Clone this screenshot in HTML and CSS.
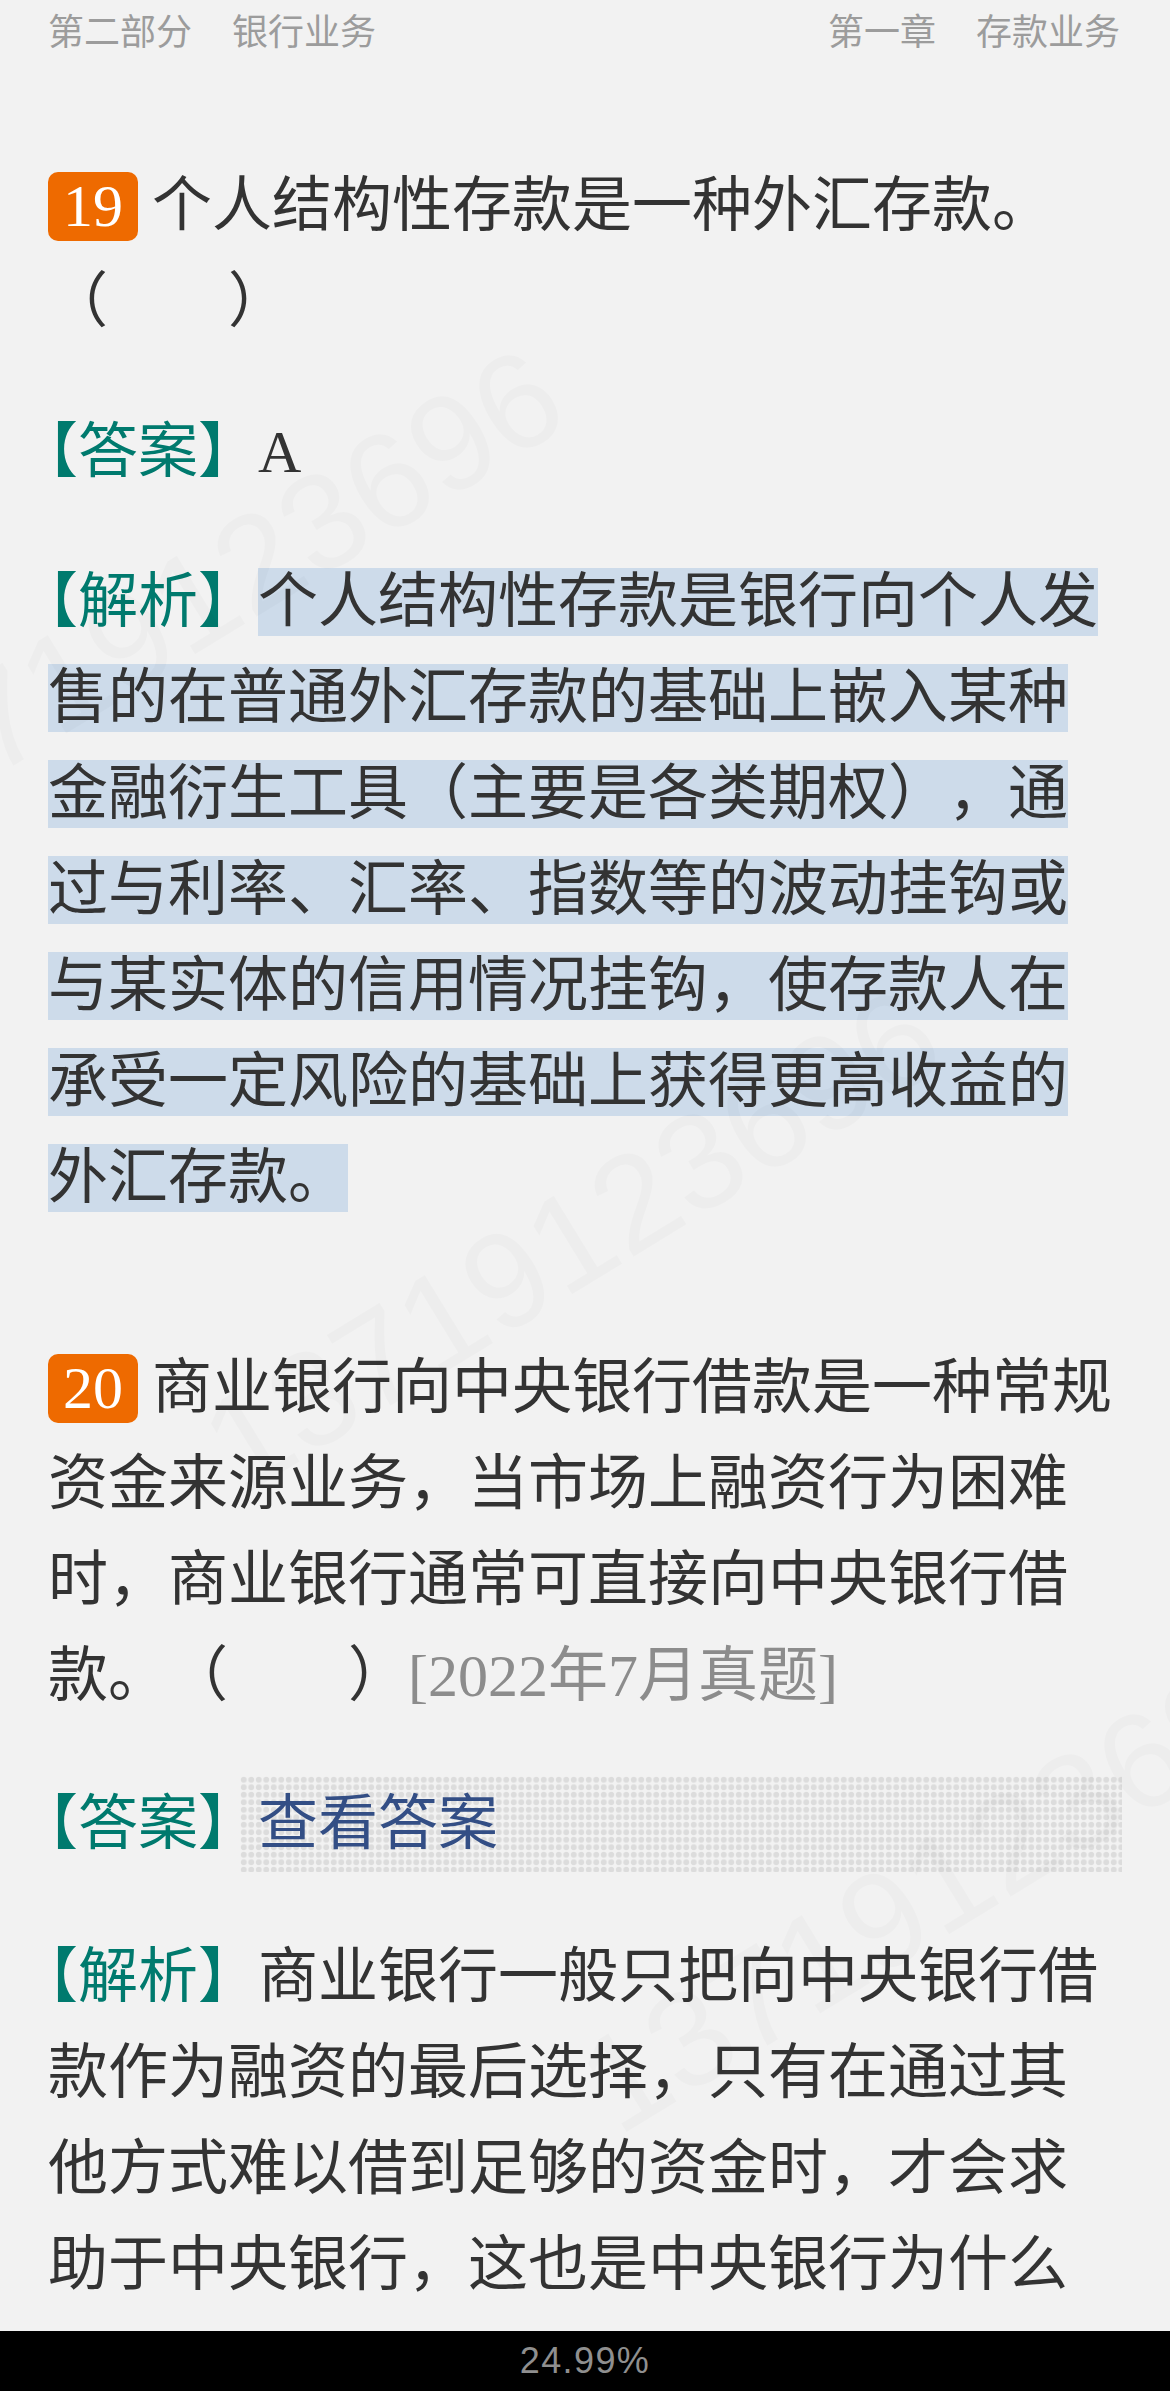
FILE: index.html
```html
<!DOCTYPE html>
<html lang="zh-CN">
<head>
<meta charset="utf-8">
<title>第一章 存款业务</title>
<link rel="stylesheet" href="styles.css">
</head>
<body>
<div class="page">
  <main class="content">
    <header class="running">
      <div class="running-side"><span>第二部分</span><span>银行业务</span></div>
      <div class="running-side"><span>第一章</span><span>存款业务</span></div>
    </header>

    <section class="question first">
      <p class="stem"><span class="badge">19</span>个人结构性存款是一种外汇存款。（　　）</p>
      <p class="answer"><span class="tag">【答案】</span>A</p>
      <p class="analysis"><span class="tag">【解析】</span><span class="marked">个人结构性存款是银行向个人发售的在普通外汇存款的基础上嵌入某种金融衍生工具（主要是各类期权），通过与利率、汇率、指数等的波动挂钩或与某实体的信用情况挂钩，使存款人在承受一定风险的基础上获得更高收益的外汇存款。</span></p>
    </section>

    <section class="question second">
      <p class="stem"><span class="badge">20</span>商业银行向中央银行借款是一种常规资金来源业务，当市场上融资行为困难时，商业银行通常可直接向中央银行借款。（　　）<span class="source">[2022年7月真题]</span></p>
      <div class="answer reveal-row"><span class="tag tight">【答案】</span><a class="reveal">查看答案</a></div>
      <p class="analysis"><span class="tag">【解析】</span>商业银行一般只把向中央银行借款作为融资的最后选择，只有在通过其他方式难以借到足够的资金时，才会求助于中央银行，这也是中央银行为什么</p>
    </section>

    <div class="watermarks" aria-hidden="true">
      <span class="wm wm-a">13719123696</span>
      <span class="wm wm-b">13719123696</span>
      <span class="wm wm-c">13719123696</span>
    </div>
  </main>
  <footer class="progress">24.99%</footer>
</div>
</body>
</html>
```

FILE: styles.css
```css
* { box-sizing: border-box; }

html, body { margin: 0; padding: 0; }

body {
  background: #f2f2f2;
  font-family: "Liberation Serif", "Noto Sans CJK SC", serif;
  color: #333;
}

.page {
  height: 100vh;
  display: flex;
  flex-direction: column;
  overflow: hidden;
}

.content {
  position: relative;
  flex: 1;
  min-height: 0;
  overflow: hidden;
  padding: 0 48px;
  font-size: 60px;
  line-height: 96px;
  text-spacing-trim: space-all;
}

.running {
  display: flex;
  justify-content: space-between;
  height: 58px;
  padding-right: 2px;
  font-family: "Noto Sans CJK SC", sans-serif;
  font-size: 36px;
  line-height: 58px;
  color: #9c9c9c;
}

.running-side { display: flex; gap: 40px; }

.question p { margin: 0; }

.first { margin-top: 100px; }
.second { margin-top: 114px; }

.badge {
  display: inline-block;
  width: 90px;
  height: 69px;
  margin-right: 14px;
  border-radius: 10px;
  background: #ee6a00;
  color: #fff;
  font-size: 60px;
  line-height: 69px;
  text-align: center;
  vertical-align: baseline;
}

.question .answer { margin-top: 54px; }
.question .analysis { margin-top: 54px; }
.second.question .answer { margin-top: 52px; }
.second.question .analysis { margin-top: 57px; }

.tag {
  display: inline-block;
  margin-right: 30px;
  color: #007a6e;
  font-feature-settings: "halt";
}

.marked {
  padding: 1px 0;
  background: #cddbea;
}

.source { color: #8c8c8c; }

.reveal-row { display: flex; }

.tag.tight { margin-right: 12px; }

.reveal {
  flex: 1;
  height: 96px;
  padding-left: 18px;
  color: #334e85;
  background-color: transparent;
  background-image: radial-gradient(circle at center, #dcdcdc 0, #dcdcdc 2.6px, transparent 3.4px);
  background-size: 7.5px 7.5px;
}

.watermarks {
  position: absolute;
  inset: 0;
  pointer-events: none;
}

.wm {
  position: absolute;
  font-family: "Liberation Sans", sans-serif;
  font-size: 136px;
  line-height: 1;
  color: rgba(0, 0, 0, 0.02);
  white-space: nowrap;
  transform: translate(-50%, -50%) rotate(-31.5deg);
}

.wm-a { left: 194px; top: 600px; }
.wm-b { left: 571px; top: 1240px; }
.wm-c { left: 948px; top: 1880px; }

.progress {
  height: 60px;
  flex: none;
  background: #000;
  color: #8f8f8f;
  font-family: "Liberation Sans", sans-serif;
  font-size: 36px;
  letter-spacing: 1.4px;
  line-height: 60px;
  text-align: center;
}
```
